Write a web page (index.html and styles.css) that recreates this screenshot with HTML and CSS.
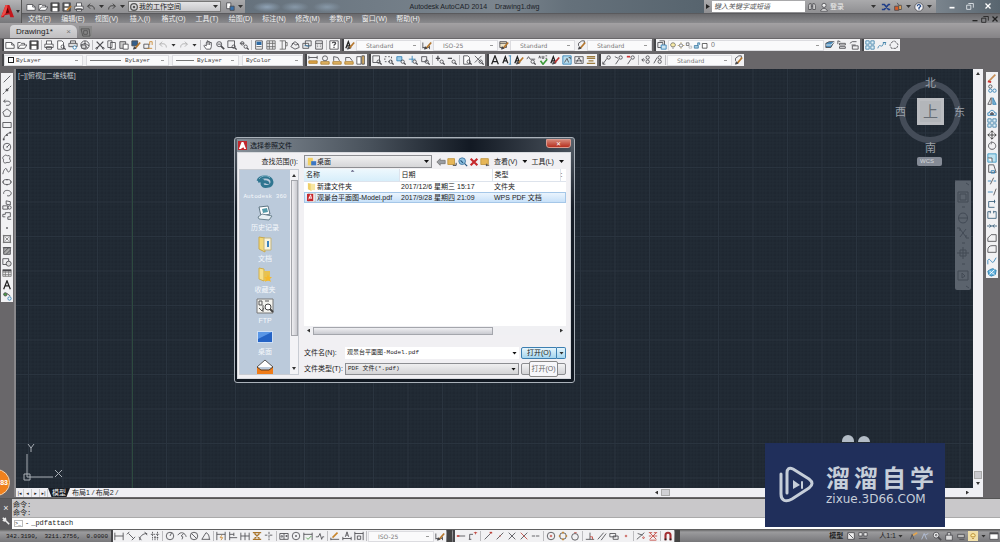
FILE: index.html
```html
<!DOCTYPE html>
<html lang="zh-CN">
<head>
<meta charset="utf-8">
<title>Autodesk AutoCAD 2014 - Drawing1.dwg</title>
<link rel="stylesheet" href="styles.css">
</head>
<body>
<div class="app">
  <header class="header">
    <button class="app-button" aria-label="应用程序菜单">
      <svg class="app-logo" viewBox="0 0 16 16"><path d="M1 14L6 1h4l5 13h-4l-1-3-5 1-1 2z" fill="#c4161c"/><path d="M6 1h2l-1 8-3 3-3 2z" fill="#ef4a45"/><path d="M8 4l2 5-4 1z" fill="#5f0508"/></svg>
      <span class="caret"></span>
    </button>
    <div class="header-rows">
      <div class="titlebar">
        <div class="quick icons" data-icons="new open save saveas print undo > redo >"></div>
        <label class="workspace"><svg viewBox="0 0 12 12" class="gear"><circle cx="6" cy="6" r="4" fill="none" stroke="#555" stroke-width="1.5"/><circle cx="6" cy="6" r="1.5" fill="#555"/></svg>
          <select aria-label="工作空间"><option>我的工作空间</option></select></label>
        <div class="quick icons" data-icons="match >"></div>
        <div class="glass"><span>Autodesk AutoCAD 2014</span><span>Drawing1.dwg</span></div>
        <div class="info">
          <span class="play"></span>
          <input class="search" aria-label="搜索" placeholder="键入关键字或短语">
          <div class="icons" data-icons="binoc user"></div>
          <button class="login">登录</button>
          <span class="caret"></span>
          <div class="icons info-icons" data-icons="exchange cart > help >"></div>
        </div>
        <div class="win-buttons icons" data-icons="wmin wmax wclose"></div>
      </div>
      <nav class="menubar">
        <button>文件(F)</button><button>编辑(E)</button><button>视图(V)</button><button>插入(I)</button><button>格式(O)</button><button>工具(T)</button><button>绘图(D)</button><button>标注(N)</button><button>修改(M)</button><button>参数(P)</button><button>窗口(W)</button><button>帮助(H)</button>
        <div class="doc-buttons icons" data-icons="dmin dmax dclose"></div>
      </nav>
    </div>
  </header>

  <div class="tabs">
    <button class="tab">Drawing1*<span class="tab-x">×</span></button>
    <button class="tab-new" aria-label="新建"><svg viewBox="0 0 12 10"><path d="M1 1h9l1 8H3zM4 3h4v4H4z" fill="none" stroke="#555"/></svg></button>
  </div>

  <div class="toolbars">
    <div class="toolrow">
      <div class="bar icons" data-icons="new open save | print preview plot globe | cut copy paste matchp block | undog > redog > | hand zoomrt zoomwin zoomprev | props design palette sheet markup calc | helpb"></div>
      <div class="bar">
        <div class="icons" data-icons="abrush"></div><select class="combo" aria-label="文字样式"><option>Standard</option></select>
        <div class="icons" data-icons="dimbrush"></div><select class="combo" aria-label="标注样式"><option>ISO-25</option></select>
        <div class="icons" data-icons="tablebrush"></div><select class="combo" aria-label="表格样式"><option>Standard</option></select>
        <div class="icons" data-icons="leadbrush"></div><select class="combo" aria-label="引线样式"><option>Standard</option></select>
      </div>
      <div class="bar">
        <div class="icons" data-icons="layers"></div>
        <label class="layer"><span class="icons tight" data-icons="bulb sun freeze lock box"></span><select aria-label="图层"><option>0</option></select></label>
        <div class="icons" data-icons="laycur layprev laystate"></div>
      </div>
      <div class="bar icons" data-icons="array4 spline hexa"></div>
    </div>
    <div class="toolrow">
      <div class="bar props">
        <label class="by by-color"><span class="swatch"></span><select aria-label="颜色"><option>ByLayer</option></select></label>
        <label class="by by-type"><span class="line"></span><select aria-label="线型"><option>ByLayer</option></select></label>
        <label class="by by-weight"><span class="line short"></span><select aria-label="线宽"><option>ByLayer</option></select></label>
        <label class="by by-plot"><select aria-label="打印样式"><option>ByColor</option></select></label>
      </div>
      <div class="bar icons" data-icons="mdist marea mregion mlist mid"></div>
      <div class="bar icons" data-icons="zoomwin zoomdyn zoomscale zoomcen zoomobj | zoomin zoomout | zoomall zoomext"></div>
      <div class="bar icons" data-icons="textA textI abrush find spell abrush2 scaletext justify convert"></div>
      <div class="bar">
        <div class="icons" data-icons="lead1 lead2 lead3 | lead4 lead5 |"></div><select class="combo" aria-label="多重引线样式"><option>Standard</option></select><div class="icons" data-icons="leadbrush"></div>
      </div>
    </div>
  </div>

  <main class="work">
    <aside class="side left"><div class="vbar" data-icons="line xline pline polygon rect arc circle cloud spline2 ellipse earc insert mkblock point hatch gradient region table bigA addsel"></div></aside>
    <section class="view">
      <div class="canvas">
        <svg class="grid" aria-hidden="true">
          <defs>
            <pattern id="cells" width="69" height="69" patternUnits="userSpaceOnUse" x="12" y="29">
              <path d="M3 0v69M7 0v69M10 0v69M14 0v69M17 0v69M21 0v69M24 0v69M28 0v69M31 0v69M38 0v69M42 0v69M45 0v69M48 0v69M52 0v69M55 0v69M59 0v69M62 0v69M66 0v69M0 3h69M0 7h69M0 10h69M0 14h69M0 17h69M0 21h69M0 24h69M0 28h69M0 31h69M0 38h69M0 42h69M0 45h69M0 48h69M0 52h69M0 55h69M0 59h69M0 62h69M0 66h69" stroke="#222b36" stroke-width="1"/>
              <path d="M.5 0v69M35 0v69M0 .5h69M0 35h69" stroke="#2a343f" stroke-width="1"/>
            </pattern>
          </defs>
          <rect width="100%" height="100%" fill="url(#cells)"/>
          <path d="M116.500 0V500" stroke="#2d4a3f"/>
        </svg>
        <span class="view-label">[−][俯视][二维线框]</span>
        <svg class="ucs" viewBox="0 0 44 44"><path d="M6 14V37H32M3 34h6v6H3z M7 4l3 4 3-4M10 8v4M34 30l7 7M41 30l-7 7" fill="none" stroke="#a9afb6"/></svg>
        <div class="cube">
          <svg viewBox="0 0 70 76"><circle cx="35" cy="38" r="28" fill="none" stroke="#444c58" stroke-width="6"/></svg>
          <span class="n">北</span><span class="w">西</span><button class="top">上</button><span class="e">东</span><span class="s">南</span>
        </div>
        <button class="wcs">WCS</button>
        <div class="navbar"><svg viewBox="0 0 16 110" fill="none" stroke="#424a55"><path d="M0 .5h16M11 3l3 2M3 12h10v10H3zM5 14h6v6H5zM7 27h3M8 33c-6 0-6 10 0 10s6-10 0-10M3 38h10M5 49l6 8M11 49l-6 8M2 48h3v3M14 58h-3v-3M7 63h3M8 67v12M2 73h12M5 70h6v6H5zM7 84h3M3 91h10v9H3zM7 93l3 3-3 2zM11 106l3 2"/></svg></div>
        <svg class="eyes" viewBox="0 0 30 8"><ellipse cx="7" cy="7" rx="6" ry="6" fill="#b3bcc6"/><ellipse cx="23" cy="8" rx="6" ry="6" fill="#b3bcc6"/></svg>
      </div>
      <div class="vscroll"><span class="up"></span><span class="vthumb"></span><span class="down"></span></div>
      <div class="layouts">
        <button aria-label="首个" class="nav">|◂</button><button aria-label="上一个" class="nav">◂</button><button aria-label="下一个" class="nav">▸</button><button aria-label="末个" class="nav">▸|</button>
        <button class="model">模型</button><button>布局1</button><i>/</i><button>布局2</button><i>/</i>
        <div class="hscroll"><span class="tri-l"></span><span class="hthumb"></span><span class="tri-r"></span></div>
      </div>
      <div class="corner"></div>
    </section>
    <aside class="side right"><div class="vbar" data-icons="erase copy2 mirror offset array4 move rotate scale stretch trim extend breakp break join chamfer fillet blend explode"></div></aside>

    <section class="dialog" role="dialog" aria-label="选择参照文件">
      <div class="dlg-title"><svg viewBox="0 0 10 10"><rect width="10" height="10" fill="#c1272d"/><path d="M1 9l3-8h2l3 8H7L6 7 3 9z" fill="#fff"/></svg><span>选择参照文件</span><button class="dlg-close" aria-label="关闭">✕</button></div>
      <div class="dlg-body">
        <div class="look">
          <label for="lookin">查找范围(I):</label>
          <div class="look-box"><svg viewBox="0 0 12 12"><path d="M1 1h6v9H1z" fill="#f0cf63"/><path d="M5 5h6v5H5z" fill="#3c77c4"/></svg><select id="lookin"><option>桌面</option></select></div>
          <div class="icons dlg-tools" data-icons="back upf searchweb del newf"></div>
          <button class="txt">查看(V)</button><span class="caret"></span><button class="txt">工具(L)</button><span class="caret"></span>
        </div>
        <div class="places">
          <div class="place-list">
            <button><svg viewBox="0 0 18 18"><path d="M2 8c2-6 14-5 14 1 0 5-9 6-10 2 0-3 6-3 6 0M2 8c2 0 4 0 5-2" fill="none" stroke="#2f7590" stroke-width="3"/><path d="M3 6c3-4 9-4 11-1" fill="none" stroke="#7fb2c5"/></svg>Autodesk 360</button>
            <button><svg viewBox="0 0 18 18"><path d="M3 3l9-1 2 8-9 2z" fill="#fff" stroke="#5e7583"/><path d="M6 5l5-1 1 4-5 1z" fill="#559baa"/><path d="M2 13l4-3 10 2-3 4-10-1z" fill="#e9f0f4" stroke="#6e8592"/></svg>历史记录</button>
            <button><svg viewBox="0 0 18 18"><path d="M3 2l6 1v14l-6-3z" fill="#f2d878" stroke="#c9a94d"/><path d="M8 3h7v12H8z" fill="#f8f4df" stroke="#c4b47c"/><path d="M12 6v6" stroke="#3b82bd" stroke-width="2"/></svg>文档</button>
            <button><svg viewBox="0 0 18 18"><path d="M3 2l5 1v12l-5-2z" fill="#f7e08a" stroke="#cfae4d"/><path d="M8 5h6v10H8z" fill="#e8c250"/><path d="M12 8l1 3h3l-2 2 1 3-3-2-3 2 1-3-2-2h3z" fill="#f5b92d"/></svg>收藏夹</button>
            <button><svg viewBox="0 0 18 18"><path d="M1 2h16v14H1z" fill="#f2f2ee" stroke="#777"/><path d="M3 4h3v4H3zM9 4h4M3 11l3 3 2-3M7 8v7" fill="none" stroke="#555"/><circle cx="12" cy="10" r="3" fill="#fff" stroke="#444"/><path d="M14 12l3 3" stroke="#444" stroke-width="2"/></svg>FTP</button>
            <button><svg viewBox="0 0 18 18"><rect x="1" y="3" width="16" height="12" fill="#cddff5"/><rect x="2" y="4" width="14" height="10" fill="#2463c5"/><path d="M2 4h14L2 11z" fill="#5996e6"/></svg>桌面</button>
            <button aria-label="Buzzsaw"><svg viewBox="0 0 18 18"><path d="M1 8l8-7 8 7" fill="#fff" stroke="#555"/><path d="M1 8l4 3h8l4-3v9H1z" fill="#ef7b18"/><path d="M1 8l4 3h8l4-3" fill="none" stroke="#603b18"/></svg></button>
          </div>
          <div class="place-scroll"><span class="up"></span><span class="pthumb"></span><span class="down"></span></div>
        </div>
        <div class="files">
          <table>
            <colgroup><col class="c-name"><col class="c-date"><col class="c-type"><col class="c-rest"></colgroup>
            <thead><tr><th class="sorted">名称</th><th>日期</th><th>类型</th><th>:</th></tr></thead>
            <tbody>
              <tr><td><svg viewBox="0 0 10 10"><path d="M1 1l4 1v8L1 8z" fill="#efcf67"/><path d="M4 2h5v7H4z" fill="#f7e6a2"/></svg>新建文件夹</td><td>2017/12/6 星期三 15:17</td><td>文件夹</td><td></td></tr>
              <tr class="sel"><td><svg viewBox="0 0 10 10"><path d="M2 0h7v10H2z" fill="#fff" stroke="#bbb"/><path d="M0 1h7v8H0z" fill="#c5272d"/><path d="M2 7l2-5 1 4-3-1" fill="none" stroke="#fff"/></svg>观景台平面图-Model.pdf</td><td>2017/9/28 星期四 21:09</td><td>WPS PDF 文档</td><td></td></tr>
            </tbody>
          </table>
          <div class="file-scroll"><span class="tri-l"></span><span class="fthumb"></span><span class="tri-r"></span></div>
        </div>
        <div class="fields">
          <label for="fname">文件名(N):</label>
          <div class="field"><input id="fname" value="观景台平面图-Model.pdf"><span class="caret"></span></div>
          <div class="open-split"><button class="open">打开(O)</button><button class="split" aria-label="打开选项"><span class="caret"></span></button></div>
          <label for="ftype">文件类型(T):</label>
          <div class="field type"><select id="ftype"><option>PDF 文件(*.pdf)</option></select><span class="caret"></span></div>
          <div class="cancel-wrap"><button class="cancel" aria-label="取消"></button><span class="tip">打开(O)</span></div>
        </div>
      </div>
    </section>
    <span class="badge">83</span>
  </main>

  <section class="command">
    <div class="cmd-grip"><span>×</span><svg viewBox="0 0 10 10"><path d="M1 1l3 3 5 5M1 4c3 2 4 0 3-3" stroke="#eee" stroke-width="2" fill="none"/></svg></div>
    <div class="cmd-main">
      <div class="history"><p>命令:</p><p>命令:</p></div>
      <label class="prompt"><span class="cmd-icon">&gt;_</span><span>-</span><input value="_pdfattach" aria-label="命令"></label>
    </div>
  </section>

  <footer class="status">
    <div class="coords"><span>342.3190,</span><span>3211.2756,</span><span>0.0000</span></div>
    <div class="bar">
      <div class="icons" data-icons="dlin dali darc dord | drad djog ddia dang | dqui dbase dcont dspace dbreak | tol centre inspect jog | dedit dtedit dupd |"></div><select class="combo" aria-label="当前标注样式"><option>ISO-25</option></select><div class="icons" data-icons="dimbrush"></div>
    </div>
    <span class="grip"></span>
    <div class="bar icons" data-icons="track from | send smid sint sapp sext | scen squad stan | sper spar sins snode | snear snone | magnet"></div>
    <span class="grip"></span>
    <div class="status-right"><button class="txt-model">模型</button><div class="icons" data-icons="sheet1 lay2"></div><button class="scale">人1:1</button><span class="caret"></span><div class="icons lights" data-icons="ann1 ann2 gearw lockw hw lamp"></div><span class="caret"></span><div class="icons" data-icons="clean"></div></div>
  </footer>

  <div class="watermark">
    <svg viewBox="0 0 36 38" fill="none" stroke="#c6ced9" stroke-width="3" stroke-linecap="round" stroke-linejoin="round"><path d="M8 27V7c0-4 2-6 6-4l16 10c4 3 4 6 0 9L13 33c-7 4-11 1-11-5V8"/><path d="M14 14v9l7-4z" fill="#c6ced9" stroke="none"/><path d="M23 16v6" stroke-width="2"/></svg>
    <div><p class="wm-name"><span>溜</span><span>溜</span><span>自</span><span>学</span></p><p class="wm-url">zixue.3D66.COM</p></div>
  </div>
</div>
<script src="icons.js"></script>
</body>
</html>
```
FILE: styles.css
```css
* { box-sizing: border-box; }
body { margin: 0; font: 7px/10px "Liberation Sans", "Noto Sans CJK SC", sans-serif; color: #222; background: #69676a; }
button, input, select { font: inherit; color: inherit; margin: 0; padding: 0; border: 0; background: none; border-radius: 0; appearance: none; outline: 0; }
p { margin: 0; }
svg { display: block; }
.app { position: relative; display: flex; flex-direction: column; height: 100vh; overflow: hidden; background: #69676a; }
.icons { display: flex; align-items: center; flex: none; }
.ib { width: 12px; height: 12px; flex: none; display: grid; place-items: center; }
.ib svg { width: 10px; height: 10px; }
.sep { width: 1px; height: 10px; margin: 0 1px; background: #bdbdc0; }
.caret { flex: none; width: 5px; height: 3px; margin: 0 2px; background: #333; clip-path: polygon(0 0, 100% 0, 50% 100%); }

/* title and menu */
.header { display: flex; height: 23px; background: #8c8c8f; }
.app-button { width: 22px; display: flex; align-items: center; background: linear-gradient(#b4b4b6, #77777a); border-right: 1px solid #555; }
.app-logo { width: 15px; height: 17px; }
.app-button .caret { margin: 0 1px; width: 4px; }
.header-rows { flex: 1; display: flex; flex-direction: column; min-width: 0; }
.titlebar { height: 13px; display: flex; align-items: center; background: linear-gradient(#aaaaac, #8f8f92); }
.quick { padding-left: 3px; }
.workspace { width: 93px; height: 11px; margin-left: 1px; display: flex; align-items: center; background: linear-gradient(#e4e4e6, #c6c6c9); border: 1px solid #777; position: relative; }
.workspace select { flex: 1; }
.workspace::after { content: ""; width: 5px; height: 3px; margin-right: 2px; background: #333; clip-path: polygon(0 0, 100% 0, 50% 100%); }
.gear { width: 10px; height: 10px; }
.glass { flex: 1; height: 13px; display: flex; justify-content: center; gap: 8px; line-height: 13px; color: #1c2228; background: radial-gradient(ellipse 14px 5px at 22px 7px, #8fa2b5, transparent), radial-gradient(ellipse 14px 5px at 50px 7px, #8798a8, transparent), radial-gradient(ellipse 14px 5px at 82px 7px, #8798a8, transparent), linear-gradient(90deg, #66727d, #7b858e 55%, #65717b 70%, #57646e); }
.glass span { white-space: nowrap; }
.info { width: 232px; display: flex; align-items: center; }
.play { width: 4px; height: 5px; margin: 0 2px; background: #222; clip-path: polygon(0 0, 100% 50%, 0 100%); }
.search { width: 93px; height: 11px; margin-right: 1px; background: #fff; padding: 0 2px; font-style: italic; }
.search::placeholder { color: #555; opacity: 1; }
.login { color: #eee; width: 40px; text-align: left; }
.info-icons { flex: 1; justify-content: space-between; padding: 0 2px; }
.win-buttons { width: 64px; height: 13px; justify-content: space-between; padding: 0 6px 2px 10px; background: linear-gradient(90deg, #7a848d, #58656f); }
.menubar { height: 10px; display: flex; align-items: center; padding-left: 1px; background: linear-gradient(#6a6a6d, #8a8a8d); border-top: 1px solid #5a5a5d; }
.menubar > button { width: 34px; color: #f0f0f0; line-height: 9px; white-space: nowrap; flex: none; text-align: center; }
.menubar > button:nth-child(odd) { width: 33px; }
.doc-buttons { margin-left: auto; }
.doc-buttons .ib { width: 10px; }
.tabs { height: 15px; display: flex; align-items: flex-end; padding-left: 10px; background: linear-gradient(#a3a1a3, #858386); }
.tab { display: flex; align-items: center; justify-content: space-between; width: 67px; height: 13px; padding: 0 6px; font-size: 8px; background: linear-gradient(#d8d8da, #c0bfc1); border-radius: 4px 6px 0 0; }
.tab-x { color: #777; }
.tab-new { width: 13px; height: 12px; margin-left: 2px; display: grid; place-items: center; background: #888; }
.tab-new svg { width: 11px; height: 9px; }

/* toolbars */
.toolbars { display: flex; flex-direction: column; gap: 2px; padding: 1px 0 2px; background: #69676a; }
.toolrow { display: flex; gap: 4px; height: 13px; padding-left: 4px; }
.bar { display: flex; align-items: center; height: 12px; background: #f1f1f3; box-shadow: -2px 0 #454548; flex: none; }
.combo { width: 65px; height: 11px; padding: 0 9px; color: #777; font: 6px/10px "DejaVu Sans", sans-serif; background: #fafafb linear-gradient(#999, #999) no-repeat right 4px center / 3px 1px; border: 1px solid #dcdce0; }
.layer { display: flex; width: 156px; height: 11px; background: #fafafb linear-gradient(#999, #999) no-repeat right 4px center / 3px 1px; border: 1px solid #dcdce0; align-items: center; }
.layer select { color: #777; flex: 1; padding-left: 2px; }
.tight .ib { width: 8px; }
.tight .ib svg { width: 8px; height: 9px; }
.by { display: flex; align-items: center; height: 11px; padding: 0 3px; background: #fafafb linear-gradient(#999, #999) no-repeat right 4px center / 3px 1px; border: 1px solid #dcdce0; }
.by select { font: 6px/9px "Liberation Mono", monospace; color: #444; }
.props { gap: 3px; }
.by-color { width: 79px; } .by-type { width: 83px; } .by-weight { width: 67px; } .by-plot { width: 61px; }
.swatch { width: 6px; height: 6px; border: 1px solid #222; margin-right: 2px; }
.line { width: 31px; height: 1px; background: #777; margin-right: 4px; }
.short { width: 18px; margin-right: 3px; }

/* drawing area */
.work { position: relative; flex: 1; min-height: 0; display: flex; }
.side { flex: none; padding-top: 4px; background: #69676a; }
.left { width: 16px; padding-left: 1px; border-right: 2px solid #88878a; }
.right { width: 17px; padding: 3px 0 0 3px; }
.vbar { width: 12px; display: flex; flex-direction: column; background: #f1f1f3; }
.left .vbar { height: 229px; } .right .vbar { height: 206px; }
.vbar .ib { flex: 1; min-height: 0; }
.view { flex: 1; min-width: 0; display: grid; grid-template: 1fr 9px / 1fr 10px; }
.canvas { position: relative; overflow: hidden; background: #1f2731; }
.grid { position: absolute; inset: 0; width: 100%; height: 100%; }
.view-label { position: absolute; left: 2px; top: 2px; color: #c5c9ce; }
.ucs { position: absolute; left: 5px; bottom: 4px; width: 44px; height: 44px; }
.cube { position: absolute; right: 8px; top: 5px; width: 70px; height: 76px; font-size: 11px; line-height: 12px; color: #9ba1a9; }
.cube span, .top { position: absolute; }
.n { left: 30px; top: 3px; } .s { left: 30px; bottom: -4px; } .w { left: 0; top: 32px; } .e { right: 0; top: 32px; }
.cube .top { left: 22px; top: 24px; width: 27px; height: 27px; background: #b3b6ba; color: #666d75; border: 3px solid #bbbdc1; font-size: 15px; line-height: 20px; }
.wcs { position: absolute; right: 31px; top: 88px; width: 25px; height: 9px; padding-left: 3px; background: #858b96; border-radius: 2px; color: #d4d7dc; font-size: 6px; line-height: 9px; text-align: left; }
.navbar { position: absolute; right: 2px; top: 111px; width: 16px; height: 110px; background: #5b636d; border-radius: 2px; }
.eyes { position: absolute; right: 102px; bottom: 46px; width: 30px; height: 8px; }
.vscroll { display: flex; flex-direction: column; align-items: center; padding: 3px 0; background: #f0f0f4; }
.up, .down { width: 4px; height: 3px; background: #333; clip-path: polygon(0 100%, 50% 0, 100% 100%); flex: none; }
.down { clip-path: polygon(0 0, 100% 0, 50% 100%); }
.vthumb { width: 8px; height: 8px; margin: auto 0 3px; background: #c9c9ce; border: 1px solid #aaa; }
.layouts { display: flex; align-items: center; background: #efeff3; line-height: 9px; }
.layouts i { margin: 0 2px; }
.nav { width: 8px; font: 5px/8px "DejaVu Sans", sans-serif; border-right: 1px solid #ccc; }
.model { background: #171b22; color: #eee; width: 22px; height: 9px; margin: 0 2px 0 0; clip-path: polygon(0 0, 100% 0, 84% 100%, 16% 100%); }
.hscroll { margin-left: auto; width: 323px; display: flex; align-items: center; height: 9px; padding: 0 1px 0 2px; }
.tri-l, .tri-r { width: 3px; height: 4px; background: #333; clip-path: polygon(100% 0, 0 50%, 100% 100%); margin: 0 3px; flex: none; }
.tri-r { clip-path: polygon(0 0, 100% 50%, 0 100%); margin-left: auto; }
.hthumb { width: 9px; height: 7px; background: #d0d0d4; border: 1px solid #aaa; }
.corner { background: #efeff3; }
.badge { position: absolute; left: -17px; bottom: 1px; width: 27px; height: 27px; border: 1px solid #f6d4ae; border-radius: 50%; background: #f0811d; color: #fff; font-weight: bold; line-height: 25px; padding-right: 1px; text-align: right; }

/* file dialog */
.dialog { position: absolute; left: 234px; top: 68px; width: 341px; height: 246px; display: flex; flex-direction: column; padding: 1px 3px 3px 2px; border: 1px solid #aab1b9; border-radius: 3px; background: linear-gradient(#59626c, #161d27 70px, #111821); }
.dlg-title { height: 13px; flex: none; display: flex; align-items: center; gap: 3px; padding-left: 1px; color: #0f151c; background: linear-gradient(90deg, #858e97, #48515b 40%, #121923 70%, #48505a); }
.dlg-title svg { width: 9px; height: 9px; }
.dlg-close { margin-left: auto; align-self: flex-start; width: 25px; height: 9px; background: linear-gradient(#d58576, #b7301f); border: 1px solid #da9b90; border-radius: 0 0 3px 3px; color: #fff; font: 6px/7px "DejaVu Sans", sans-serif; }
.dlg-body { flex: 1; min-height: 0; display: grid; grid-template: 15px 166px minmax(0, 1fr) / 60px minmax(0, 1fr); gap: 0 5px; padding: 1px 4px 3px 1px; background: #f1f0f3; border: 1px solid #d8dade; }
.look { grid-column: 1 / 3; display: flex; align-items: center; }
.look > label { width: 65px; text-align: right; padding-right: 6px; }
.look-box { width: 128px; height: 13px; display: flex; align-items: center; border: 1px solid #8d8e92; background: linear-gradient(#f0f0f1, #d6d6d8); padding: 0 2px; }
.look-box svg { width: 10px; height: 10px; }
.look-box select { flex: 1; }
.look-box::after { content: ""; width: 5px; height: 3px; background: #111; clip-path: polygon(0 0, 100% 0, 50% 100%); }
.dlg-tools { margin: 0 2px 0 3px; }
.dlg-tools .ib { width: 11px; }
.txt { white-space: nowrap; margin: 0 auto 0 2px; }
.look .caret { background: #111; }
.places { grid-row: 2 / 4; display: flex; min-height: 0; border: 1px solid #c8ccd3; background: #bbcadb; }
.place-list { flex: 1; min-height: 0; overflow: hidden; padding-top: 3px; }
.place-list button { width: 100%; height: 31px; display: flex; flex-direction: column; align-items: center; justify-content: flex-start; color: #f5f8fb; line-height: 12px; white-space: nowrap; }
.place-list svg { width: 18px; height: 18px; flex: none; }
.place-list button:first-child { font: 6px/12px "Liberation Mono", monospace; }
.place-scroll { width: 8px; display: flex; flex-direction: column; align-items: center; padding: 4px 0; background: #f3f3f6; }
.pthumb { width: 7px; height: 156px; margin: 3px 0 auto; border: 1px solid #a4a6ac; background: linear-gradient(90deg, #efeff2, #c9cad0); }
.files { display: flex; flex-direction: column; background: #fff; min-width: 0; }
table { width: 100%; table-layout: fixed; border-collapse: collapse; line-height: 10px; white-space: nowrap; }
.c-name { width: 95px; } .c-date { width: 93px; } .c-rest { width: 6px; }
th { height: 12px; padding: 0 2px; font-weight: normal; text-align: left; border-right: 1px solid #dde3ec; border-bottom: 1px solid #dde3ec; }
th:last-child { border-right: 0; padding: 0; }
.sorted { background: linear-gradient(#eef8fd, #d7eefa); }
.sorted::after { content: ""; float: right; width: 4px; height: 2px; margin: 0 42px 0 0; background: #668; clip-path: polygon(0 100%, 50% 0, 100% 100%); }
td { height: 11px; padding: 0 2px; overflow: hidden; }
td:last-child { padding: 0; }
td svg { display: inline-block; width: 9px; height: 9px; vertical-align: -2px; margin: 0 1px; }
.sel { background: linear-gradient(#eef6fe, #c4dff8); outline: 1px solid #a5c7e8; outline-offset: -1px; }
.file-scroll { margin-top: auto; height: 9px; display: flex; align-items: center; background: #f0f0f3; }
.fthumb { width: 180px; height: 8px; border: 1px solid #a4a6ac; background: linear-gradient(#efeff2, #c9cad0); }
.fields { display: grid; grid-template-columns: 39px 174px 45px; align-content: end; gap: 4px 0; justify-content: space-between; padding-bottom: 0; }
.fields label { line-height: 12px; white-space: nowrap; }
.field { display: flex; align-items: center; height: 12px; background: #fff; font: 6px/10px "Liberation Mono", "Noto Sans CJK SC", monospace; }
.field input, .field select { flex: 1; min-width: 0; padding-left: 2px; }
.field .caret { background: #111; }
.type { border: 1px solid #8d8e92; background: linear-gradient(#efeff0, #d4d4d6); }
.open-split { display: flex; height: 12px; }
.open { flex: 1; border: 1px solid #3c7fb1; border-radius: 2px 0 0 2px; background: linear-gradient(#e6f5fc, #a4d5ee); line-height: 10px; white-space: nowrap; }
.split { width: 9px; border: 1px solid #3c7fb1; border-left: 0; border-radius: 0 2px 2px 0; background: linear-gradient(#e6f5fc, #a4d5ee); display: grid; place-items: center; }
.cancel-wrap { position: relative; }
.cancel { display: block; width: 100%; height: 12px; border: 1px solid #8d8e92; border-radius: 2px; background: linear-gradient(#f4f4f5, #d2d2d5); }
.tip { position: absolute; left: 8px; top: -2px; width: 29px; height: 16px; border: 1px solid #888; background: #f7f7fa; color: #666; line-height: 14px; text-align: center; border-radius: 2px; }

/* command line and status */
.command { display: flex; height: 31px; flex: none; margin-top: 1px; border-top: 1px solid #555; background: #c9c8ca; }
.cmd-grip { width: 12px; display: flex; flex-direction: column; align-items: center; justify-content: space-evenly; color: #eee; font-size: 9px; background: #5c5b5e; }
.cmd-grip svg { width: 8px; height: 8px; }
.cmd-main { flex: 1; display: flex; flex-direction: column; }
.history { flex: 1; padding: 2px 0 0 1px; line-height: 8px; font-family: "Liberation Mono", "Noto Sans CJK SC", monospace; }
.prompt { display: flex; align-items: center; gap: 2px; height: 12px; padding-left: 2px; background: #fff; font: 7px/11px "Liberation Mono", monospace; border-top: 1px solid #aaa; }
.prompt input { flex: 1; }
.cmd-icon { width: 9px; height: 7px; font-size: 5px; line-height: 6px; border: 1px solid #bbb; }
.status { display: flex; flex: none; align-items: flex-end; height: 13px; background: linear-gradient(#555, #9b9b9d 3px, #77777a); }
.coords { width: 113px; display: flex; gap: 6px; padding-left: 6px; font-family: "Liberation Mono", monospace; font-size: 6px; color: #151515; }
.status .combo { width: 66px; }
.grip { width: 5px; height: 12px; margin: 0 3px 0 1px; background: #444; }
.status-right { margin-left: auto; display: flex; align-items: center; height: 12px; }
.txt-model { margin-right: 2px; font-weight: bold; white-space: nowrap; }
.scale { margin-left: 10px; white-space: nowrap; }
.lights { margin-left: 2px; }

.watermark { position: absolute; right: 55px; bottom: 15px; width: 180px; height: 84px; display: flex; align-items: center; gap: 11px; padding: 0 0 0 14px; background: #202f5b; color: #c6ced9; }
.watermark svg { width: 36px; height: 38px; }
.wm-name { display: flex; gap: 4px; margin-bottom: 2px; font: bold 24px/26px "Noto Sans CJK SC", sans-serif; white-space: nowrap; }
.wm-url { font: 12px/14px "DejaVu Sans", sans-serif; white-space: nowrap; }
```
FILE: icons.js
```js
const mag = '<circle cx="8" cy="8" r="2"/><path d="M9.500 9.500L11.500 11.500" stroke-width="1.500"/>';
const brush = '<path d="M5 10l6-7" stroke="#b5772d" stroke-width="2"/><path d="M3 11l3-1-2-2z" fill="#333"/>';
const A = '<path d="M1 10L4 2l3 8M2 7h4" stroke="#222" stroke-width="1.500"/>';
const page = '<path d="M2 1h5l2 2v8H2z" fill="#fff"/>';
const red = 'stroke="#c0433b"';
const blue = 'stroke="#2f7eb4"';
const tan = 'stroke="#c8862c"';

const ICONS = {
  new: '<path d="M1 3h7l3 3v4H1z" fill="#fff"/><path d="M8 3v3h3"/>',
  open: '<path d="M1 10V3h3l1 1h4v2M1 10l3-4h8l-3 4z" fill="#fff"/>',
  save: '<path d="M1 1h10v10H1z" fill="#444"/><path d="M3 2h6v3H3zM3 7h6v4H3z" fill="#fff" stroke="none"/>',
  saveas: '<path d="M1 1h9v10H1z" fill="#555"/><path d="M3 2h5v3H3zM3 7h5v3H3z" fill="#fff" stroke="none"/><path d="M6 10l5-5" stroke="#b5772d" stroke-width="2"/>',
  print: '<path d="M3 5V1h6v4M1 5h10v4H1zM3 8h6v3H3z" fill="#fff"/>',
  preview: page + mag, plot: '<path d="M3 4V1h6v3M1 4h10v4H1z" fill="#ddd"/><circle cx="8" cy="9" r="2" stroke="#2f7eb4" fill="#fff"/>',
  globe: '<circle cx="6" cy="6" r="5"/><path d="M1 6l5-2 5 3M6 1v5l3 4" /><path d="M2 6h5v4H2z" fill="#ddd"/>',
  cut: '<path d="M2 2l8 8M10 2l-8 8" stroke-width="1.500"/><circle cx="2" cy="10" r="1"/><circle cx="10" cy="10" r="1"/>',
  copy: '<path d="M1 1h5v8H1zM4 3h6v8H4z" fill="#fff"/>',
  paste: '<path d="M1 2h7v8H1z" fill="#c9c9c9"/><path d="M5 5h6v6H5z" fill="#fff"/>',
  matchp: '<path d="M1 1h7v6H1z" fill="#345f8c"/>' + brush,
  block: '<path d="M1 5h6v5H1z"/><path d="M5 10h6M8 6V2h3v4" ' + tan + '/>',
  undo: '<path d="M10 9c0-5-4-5-8-4M5 2L2 5l3 3" stroke="#333"/>', redo: '<path d="M2 9c0-5 4-5 8-4M7 2l3 3-3 3" stroke="#333"/>',
  undog: '<path d="M10 9c0-5-4-5-8-4M5 2L2 5l3 3" stroke="#aaa"/>', redog: '<path d="M2 9c0-5 4-5 8-4M7 2l3 3-3 3" stroke="#aaa"/>',
  hand: '<path d="M4 11L1 7l1-1 2 1V3h1V1h1v1h2v1h2v5l-1 3zM6 2v4M8 3v3" fill="#fff"/>',
  zoomrt: '<circle cx="5" cy="5" r="3"/><path d="M7 7l4 4" stroke-width="2"/><path d="M3 5h4"/>',
  zoomwin: '<path d="M1 1h8v8H1z"/>' + mag, zoomprev: '<circle cx="4" cy="4" r="2"/><path d="M1 4h5"/>' + mag,
  zoomdyn: '<path d="M1 2h8v6H1z" stroke-dasharray="2 2"/>' + mag,
  zoomscale: '<path d="M1 2h6v5H1z" stroke="#2f7eb4" fill="#9ccbe6"/>' + mag,
  zoomcen: '<path d="M1 5h8M5 1v8" ' + blue + '/>' + mag, zoomobj: '<path d="M2 2h6v6H2z"/>' + mag,
  zoomin: '<path d="M1 4h5M3.500 1v6" stroke-width="1.500"/>' + mag, zoomout: '<path d="M1 4h5" stroke-width="1.500"/>' + mag,
  zoomall: page + mag, zoomext: '<path d="M1 1l8 8M9 1L1 9"/>' + mag,
  props: '<path d="M2 1h8v10H2z" fill="#fff"/><path d="M3 2h6v4H3z" fill="#2c6aa5" stroke="none"/><path d="M3 8h6"/>',
  design: '<path d="M1 1h10v10H1zM4 1v10M8 1v10M1 4h10M1 8h10" stroke="#666"/>',
  palette: '<path d="M2 1h7v10H2M5 1v10M9 3h2v4H9" stroke="#666"/>',
  sheet: '<path d="M1 8l3-4 3 2 3-1 1 4-5 2zM2 5l4-3 4 3"/>', markup: '<path d="M1 4h7v6H1zM4 1h7v6H4z"/><path d="M3 7c2-2 4 2 6 0" ' + blue + '/>',
  calc: '<path d="M2 1h8v10H2zM2 4h8M4 6h1M7 6h1M4 8h1M7 8h1"/>',
  helpb: '<path d="M1 1h10v10H1z" fill="#fff"/><path d="M4 4c0-2 4-2 4 0 0 1-2 1-2 3M6 8v1.500" stroke-width="1.500"/>',
  abrush: A + brush, abrush2: A + brush.replace('#b5772d', '#b33'),
  dimbrush: '<path d="M1 3v7M1 9h8M9 7v4"/>' + brush,
  tablebrush: '<path d="M1 2h8v7H1z" fill="#efe4c6"/><path d="M1 4h8"/>' + brush,
  leadbrush: '<path d="M3 7V4l4-3h3v4"/>' + brush,
  layers: '<path d="M1 3h6v6H1zM3 1h6v6"/><path d="M5 6h6v5H5z" fill="#cde4f1" stroke="#2f7eb4"/>',
  bulb: '<path d="M4 8c-3-3-1-6 2-6s5 3 2 6zM5 10h2" fill="#f7eaa6"/>', sun: '<circle cx="6" cy="6" r="2.500"/><path d="M6 1v2M6 9v2M1 6h2M9 6h2" stroke="#a88b3a"/>',
  freeze: '<path d="M2 2h4v4H2z"/><path d="M6 7h4v3H6z" stroke="#aaa"/>', lock: '<path d="M2 6h6v4H2zM7 6V2h3v3" stroke="#2b6a98" fill="#9fc9df"/>', box: '<path d="M2 3h7v7H2z" fill="#fff" stroke="#222"/>',
  laycur: '<path d="M1 4l4-2h6l-4 7H1z" fill="#4c8dbc"/><path d="M1 6h6l4-4" stroke="#fff"/>', layprev: '<path d="M3 4h7v2H3zM3 8h7v2H3zM1 5V1l3 1"/>', laystate: '<path d="M1 4l3-2h5M3 6h5M4 7h7v4H4z"/>',
  array4: '<path d="M1 1h4v4H1zM7 1h4v4H7zM1 7h4v4H1zM7 7h4v4H7z" stroke="#3d7fa8" fill="#e2f0f7"/>',
  spline: '<path d="M1 10c2-7 4 0 6-4l1-3h3M7 3h3v3" stroke="#3d7fa8"/>', hexa: '<path d="M3 3l3-2 3 2 2 3-2 4H3L1 6z" stroke-dasharray="3 1"/>',
  mdist: '<path d="M1 3h10M1 1v4M11 1v4" /><path d="M1 7h10v3H1z" fill="#dfa545" stroke="#a97b2d"/>',
  marea: '<circle cx="6" cy="4" r="3"/><path d="M1 8h10v3H1z" fill="#e3b768" stroke="#a97b2d"/>',
  mregion: '<path d="M2 7V2l5 1 2 4"/><path d="M1 8h10v3H1z" fill="#e3b768" stroke="#a97b2d"/>',
  mlist: '<path d="M2 7V3h5l3 4"/><path d="M1 8h10v3H1z" fill="#e3b768" stroke="#a97b2d"/>', mid: '<path d="M1 2h5v9H1z" fill="#fff"/><path d="M7 1h3v10H7z" fill="#e3b768"/>',
  textA: '<path d="M2 11L6 1l4 10M3 8h6" stroke="#222" stroke-width="1.500"/>', textI: A + '<path d="M10 1v10M8 1h3M8 11h3" ' + blue + '/>',
  find: '<path d="M1 5l2-3 2 3M5 5h6"/>' + mag, spell: '<path d="M1 4l1-3 1 3M5 1v3h2V1M9 1h2M9 4h2"/><path d="M3 7l3 4 5-6" stroke="#3d9a3a" stroke-width="2"/>',
  scaletext: '<path d="M1 1h10v10H1z" fill="#b5dbed" stroke="#2f7eb4"/><path d="M3 9l3-5 2 5M8 3h2v2"/>', justify: '<path d="M1 2h10v8H1z"/><path d="M3 9l3-6 3 6M2 7h8"/>', convert: '<path d="M1 2h10M1 4h10M3 7h6M1 10h10" stroke="#9b7b3f" stroke-width="1.500"/>',
  lead1: '<path d="M1 11l5-7M1 8v3h3"/><circle cx="8" cy="3" r="2"/>', lead2: '<path d="M2 11l4-6M1 2l4 2"/><circle cx="8" cy="3" r="2"/>', lead3: '<path d="M2 11l4-6"/><path d="M1 2h4" stroke="#c33" stroke-width="2"/><circle cx="8" cy="3" r="2"/>',
  lead4: '<path d="M1 6h4M3 4l-2 2 2 2"/><circle cx="8" cy="3" r="2"/><circle cx="8" cy="8" r="2"/>', lead5: '<path d="M1 10l4-7"/><circle cx="8" cy="3" r="2"/><circle cx="8" cy="8" r="2"/>',
  line: '<path d="M2 10l8-8"/>', xline: '<path d="M1 11l10-10" stroke-dasharray="3 1"/><path d="M5 5h2v2H5z" fill="#333"/>', pline: '<path d="M2 5h5c4 0 4 5 0 5H5M4 3L2 5l2 2"/>',
  polygon: '<path d="M6 1l5 4-2 5H3L1 5z"/>', rect: '<path d="M1 3h10v6H1z"/>', arc: '<path d="M2 11c0-4 3-8 8-9"/><path d="M1 10h2M5 5h2M9 2h2" stroke-width="2"/>', circle: '<circle cx="6" cy="6" r="4.500"/><path d="M6 6l3-3M5 6h2"/>',
  cloud: '<path d="M3 2c2-2 3 1 4 0 3-1 3 2 2 4 3 3 0 5-3 4-3 2-5 0-4-3-2-2-1-4 1-5z"/>', spline2: '<path d="M1 11c1-6 4-9 5-5s4 3 5-4"/>', ellipse: '<ellipse cx="6" cy="6" rx="5" ry="3"/><path d="M1 6h1M10 6h1M6 3v1M6 9v1" stroke-width="2"/>', earc: '<path d="M2 7c-1-6 10-5 9 0-1 3-4 3-5 2"/>',
  insert: '<path d="M1 7h6v4H1zM5 1l5 1v4L5 5z"/><circle cx="9" cy="9" r="2"/>', mkblock: '<path d="M1 7V4h3V2h6v5H7v3h4M1 7h3"/>', point: '<path d="M5 6h2" stroke-width="2"/>',
  hatch: '<path d="M2 2h8v8H2z"/><path d="M1 2h10M1 10h10M2 1v10M10 1v10M4 8l4-4M4 4l4 4" stroke="#777"/>', gradient: '<path d="M2 2h8v8H2z" fill="#aaa"/><path d="M1 2h10M2 8l6-6M5 10l5-5"/>', region: '<path d="M1 2h7v7H1z"/><circle cx="8" cy="8" r="3" fill="#ddd"/>', table: '<path d="M1 2h10v8H1zM1 5h10M1 8h10M4 4v6M8 4v6" stroke="#777"/><path d="M1 3h10" stroke-width="2"/>', bigA: '<path d="M2 11L6 1l4 10M3 7h6" stroke="#222" stroke-width="1.500"/>', addsel: '<circle cx="4" cy="4" r="2" fill="#4d9b48"/><circle cx="9" cy="9" r="2" stroke="#2f7eb4"/><path d="M6 3l4 3"/>',
  erase: '<path d="M2 10l8-8" stroke="#c78f58" stroke-width="2"/><path d="M1 10l4 1" stroke="#c33" stroke-width="2"/>', copy2: '<circle cx="4" cy="3" r="2"/><circle cx="4" cy="8" r="2" stroke="#2f7eb4"/><circle cx="9" cy="8" r="2" stroke="#2f7eb4"/>', mirror: '<path d="M5 2v8H1z"/><path d="M7 2v8h4z" fill="#80b7d5" stroke="#2f7eb4"/>', offset: '<path d="M1 10h10V7H9c0-4-6-4-6 0H1z" stroke="#2f7eb4"/><path d="M4 9c0-3 4-3 4 0z" fill="#667"/>',
  move: '<path d="M6 1v10M1 6h10M4 3l2-2 2 2M4 9l2 2 2-2M3 4L1 6l2 2M9 4l2 2-2 2" stroke="#333"/>', rotate: '<path d="M4 2c-4 3-2 8 2 8 5 0 6-6 2-8L5 1v3"/>', scale: '<path d="M1 1h10v10H1z" stroke="#3794bf" fill="#bfe2f0"/><path d="M1 6h5v5" fill="#fff"/>', stretch: '<path d="M2 1h6l3 9H2z"/><path d="M5 8h4v3H5z" ' + blue + '/>',
  trim: '<path d="M1 6h4M8 6h3" ' + blue + '/><path d="M4 10l4-8"/>', extend: '<path d="M1 6h6" ' + blue + '/><path d="M8 10l3-8"/>', breakp: '<path d="M10 3H2v7h7M9 1v4" stroke="#345c78"/>', break: '<path d="M4 2H1v8h10V2H8M4 1v3M8 1v3" stroke="#345c78"/>', join: '<path d="M0 6h12M3 4l2 2-2 2M9 4L7 6l2 2" stroke="#345c78"/>', chamfer: '<path d="M1 10V6l4-4h6v8z"/>', fillet: '<path d="M1 10V7c0-3 2-5 5-5h5v8z"/>', blend: '<path d="M1 10V5c3-4 4 5 7 2l3-5" ' + blue + '/>', explode: '<path d="M1 5l3-2 3-1 4 2-1 5-5 2-3-2z" fill="#65b2dd" stroke="#2378a9"/><path d="M3 5l6 4M9 3L3 9" stroke="#fff"/>',
  match: '<path d="M2 1h5v7H2z" fill="#fff"/><path d="M6 5h5v5H6z" fill="#3872ad"/>', binoc: '<path d="M2 9V4l1-2h2v7zM7 9V2h2l1 2v5zM5 5h2" fill="#ddd"/>', user: '<circle cx="6" cy="4" r="2.500" fill="#eee"/><path d="M2 11c0-4 8-4 8 0z" fill="#eee"/>',
  exchange: '<path d="M1 3h3l5 6h2M1 9h3l5-6h2" stroke="#213f89" stroke-width="2"/>', cart: '<path d="M2 5h5v5H2z" fill="#d85a26"/><path d="M7 4h3v5H7zM5 1l2 3" fill="#f4b05c"/>', help: '<circle cx="6" cy="6" r="5" fill="#f4f4f8"/><path d="M4 5c0-3 4-2 4 0L6 7v2" stroke="#244984" stroke-width="1.500"/>',
  wmin: '<path d="M3 8h6" stroke="#fff" stroke-width="2"/>', wmax: '<path d="M2 5h5v5H2zM4 3h6v5" stroke="#e9edf1"/>', wclose: '<path d="M3 3l6 6M9 3L3 9" stroke="#fff" stroke-width="1.500"/>',
  dmin: '<path d="M3 8h6" stroke="#222" stroke-width="1.500"/>', dmax: '<path d="M2 5h5v5H2zM4 3h6v5" stroke="#222"/>', dclose: '<path d="M3 3l6 6M9 3L3 9" stroke="#222" stroke-width="1.500"/>',
  back: '<path d="M1 6l4-4v2h6v4H5v2z" fill="#9a9da2" stroke="#777"/>', upf: '<path d="M1 2h8v7H1z" fill="#e6b658" stroke="#bd913b"/><path d="M7 10h4V7" stroke="#222"/>', searchweb: '<circle cx="5" cy="5" r="4" fill="#8fc1e0" stroke="#38709e"/><path d="M3 4l3 3M8 8l3 3" stroke="#26577f" stroke-width="1.500"/>', del: '<path d="M2 2l8 8M10 2l-8 8" stroke="#c5282c" stroke-width="2.500"/>', newf: '<path d="M1 2h9v7H1z" fill="#e6b658" stroke="#bd913b"/><path d="M8 8v3M11 10H7"/>',
  dlin: '<path d="M1 2v9M11 2v9M1 6h10"/>', dali: '<path d="M1 4l3-3M7 11l4-4M3 3l6 6"/>', darc: '<path d="M2 11c0-5 4-8 9-8M1 7l3 4M8 1l3 4"/>', dord: '<path d="M3 1v10M1 4h10M6 6v5M9 1v10M5 8h6" stroke-dasharray="2 1"/>',
  drad: '<circle cx="6" cy="6" r="4.500"/><path d="M6 6l2-4"/>', djog: '<path d="M1 5c3-5 9-3 10 2M6 10l1-3-2-1 3-3"/>', ddia: '<circle cx="6" cy="6" r="4.500"/><path d="M3 3l6 6"/>', dang: '<path d="M1 10h10M1 10l5-8M6 2c3 1 4 4 4 8"/>',
  dqui: '<path d="M1 1v10M11 1v10M1 4h10"/><path d="M7 5l-2 3h3l-2 3" ' + tan + '/>', dbase: '<path d="M2 1v10M2 4h5M2 8h9M7 2v4"/>', dcont: '<path d="M1 2v9M6 2v9M11 2v9M1 6h10"/>', dspace: '<path d="M1 2h10M1 10h10M3 3l6 6M9 3L3 9" stroke="#a9752c" stroke-width="1.500"/>', dbreak: '<path d="M1 5h3M7 5h4M6 1v10" stroke-dasharray="3 1"/>',
  tol: '<path d="M1 3h10v7H1zM6 3v7"/><circle cx="3.500" cy="6.500" r="1"/><path d="M8 6h2" stroke-width="2"/>', centre: '<circle cx="6" cy="6" r="4.500"/><path d="M5 6h2" stroke-width="2"/>', inspect: '<path d="M1 2v9M11 2v9M1 4h10"/><path d="M4 8l2 2 4-4" stroke="#4b9d44"/>', jog: '<path d="M1 7h3l2-4 2 7 1-3h2"/>', dedit: '<path d="M1 10h10M1 8v3"/><path d="M3 8l6-6" ' + tan + ' stroke-width="2"/>', dtedit: '<path d="M1 7v4M11 7v4M1 9h10M4 7l2-6 2 6M5 5h2"/>', dupd: '<path d="M1 1v10M11 1v10M1 3h10M4 6h4v4H4z"/>',
  track: '<path d="M3 6h8"/><path d="M1 6h3" ' + red + ' stroke-width="2"/>', from: '<path d="M2 10V4h4M1 10h3"/><path d="M7 2h4M9 1v3" ' + red + '/>', send: '<path d="M2 10l7-7"/><path d="M8 2h3" ' + red + ' stroke-width="2"/>', smid: '<path d="M2 10l8-8"/><path d="M5 6h2" ' + red + '/>', sint: '<path d="M2 2l8 8M10 2l-8 8"/>', sapp: '<path d="M2 2l8 8" ' + red + '/><path d="M10 2l-8 8"/>', sext: '<path d="M1 6h10" stroke-dasharray="4 1"/>',
  scen: '<circle cx="6" cy="6" r="4.500"/><circle cx="6" cy="6" r="1" ' + red + '/>', squad: '<circle cx="6" cy="6" r="4"/><path d="M5 2h2M5 10h2M2 5v2M10 5v2" ' + tan + ' stroke-width="2"/>', stan: '<circle cx="6" cy="7" r="4"/><path d="M5 2h3" ' + red + '/>', sper: '<path d="M1 10h10M6 10V2"/><path d="M6 7h3v3" ' + red + '/>', spar: '<path d="M1 10l7-8M5 11l6-8"/>', sins: '<path d="M1 3h7v4H1zM5 6h6v4H5z"/>', snode: '<circle cx="6" cy="6" r="1" ' + red + '/>', snear: '<path d="M1 10l9-8M2 3l6 2"/><circle cx="9" cy="8" r="1" ' + red + '/>', snone: '<path d="M2 2l8 8M10 2l-8 8M1 2h4M7 2h4M6 6h5M1 6h3M2 11h8" ' + red + '/>', magnet: '<path d="M3 11V5c0-4 6-4 6 0v6" stroke="#a32f32" stroke-width="2.500"/><path d="M2 10h2M8 10h2" stroke="#222" stroke-width="2"/>',
  sheet1: '<path d="M2 2h8v8H2z" fill="#eee"/><path d="M3 3l6 6"/>', lay2: '<path d="M1 2h4v4H1zM7 2h4v4H7zM1 9h10" fill="#eee"/>', ann1: '<path d="M3 10l2-6 2 6"/><path d="M6 5l5-3" stroke="#e3a54e" stroke-width="2"/>', ann2: '<path d="M2 10l3-7 3 7M6 5l4-2" stroke="#b6c3dc"/>', gearw: '<circle cx="5" cy="5" r="3.500" fill="#eee"/><circle cx="5" cy="5" r="1"/><path d="M7 7l4 4" stroke-width="2"/>', lockw: '<path d="M2 5h8v6H2zM4 5V2h4v3" fill="#ddd"/>', hw: '<path d="M2 4h8v4H2z" fill="#bbb"/><path d="M4 10h6"/>', lamp: '<path d="M0 0h12v12H0z" fill="#f0dfa8" stroke="none"/><path d="M4 7c-3-5 7-5 4 0zM5 9h2" fill="#fff1a8" stroke="#ae7d22"/>', clean: '<path d="M1 2h10v8H1z" fill="#fff"/><path d="M1 3h10" stroke-width="2"/>'
};

document.querySelectorAll('[data-icons]').forEach(host => {
  host.innerHTML = host.dataset.icons.split(' ').map(name => {
    if (name === '|') return '<span class="sep"></span>';
    if (name === '>') return '<span class="caret"></span>';
    return `<button class="ib" aria-label="${name}"><svg viewBox="0 0 12 12" fill="none" stroke="#4b4b4f">${ICONS[name]}</svg></button>`;
  }).join('');
});
```
